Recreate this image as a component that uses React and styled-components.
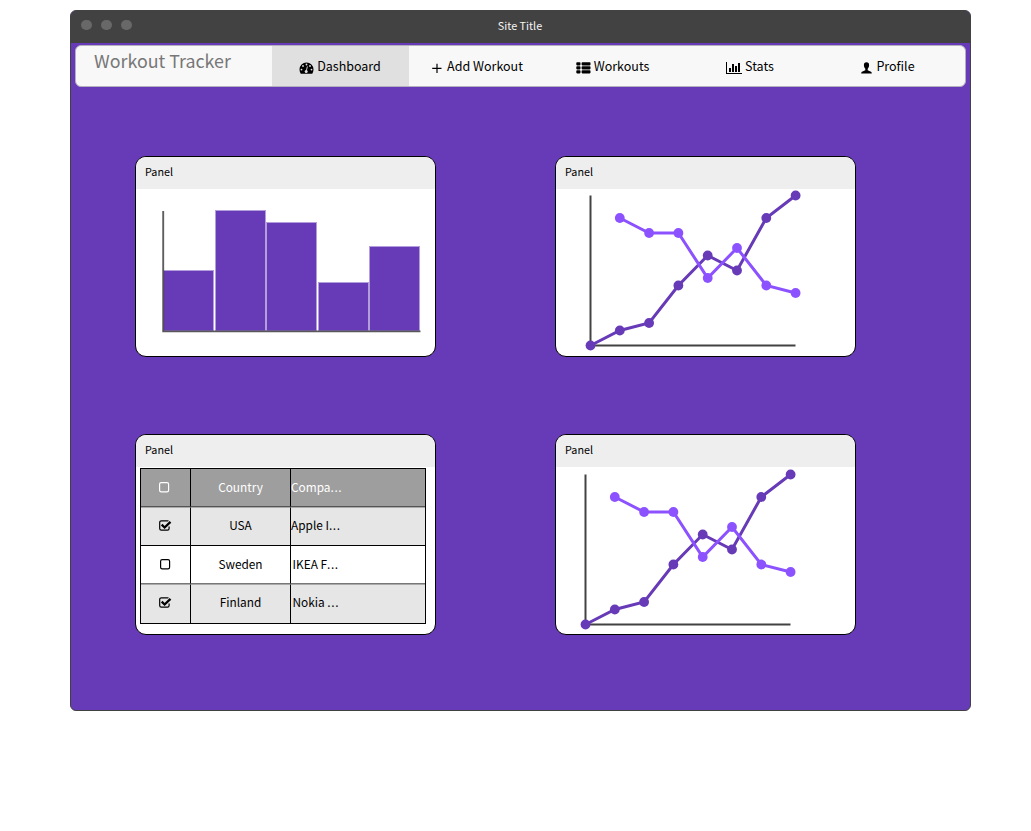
import React from "react";
import styled, { createGlobalStyle } from "styled-components";

const GlobalStyle = createGlobalStyle`
  * { box-sizing: border-box; }
  body {
    margin: 0;
    background: #fff;
    font-family: "Noto Sans CJK SC", "Noto Sans", sans-serif;
    color: #000;
  }
  svg { display: block; flex: none; }
`;

const Page = styled.div`
  padding: 10px 60px 0 70px;
`;

const Window = styled.div`
  width: 901px;
  height: 701px;
  border: 1px solid #424242;
  border-radius: 6px;
  background: #673ab7;
  overflow: hidden;
`;

const TitleBar = styled.header`
  display: grid;
  grid-template-columns: 1fr auto 1fr;
  align-items: center;
  height: 32px;
  padding: 0 11px 4px 10px;
  background: #424242;
  color: #f5f5f5;
  font-size: 10.8px;
  line-height: 16px;
`;

const Dots = styled.div`
  display: flex;
  gap: 9.4px;
`;

const Dot = styled.span`
  width: 10.6px;
  height: 10.6px;
  border-radius: 50%;
  background: #686868;
`;

const Nav = styled.nav`
  display: flex;
  width: 891px;
  height: 42px;
  margin: 2px 0 0 4px;
  border: 1px solid #b5b0bd;
  border-radius: 6px;
  background: #f8f8f8;
  overflow: hidden;
`;

const Brand = styled.div`
  width: 196px;
  padding: 1px 0 0 18px;
  color: #777;
  font-size: 17.85px;
  line-height: 26px;
  white-space: nowrap;
`;

const NavItem = styled.a`
  display: flex;
  align-items: center;
  justify-content: center;
  gap: ${({ $gap }) => $gap || 3}px;
  width: 137px;
  padding: 3px ${({ $shift }) => $shift || 0}px 0 0;
  background: ${({ $active }) => ($active ? "#e0e0e0" : "transparent")};
  font-size: 12.5px;
  line-height: 20px;
  white-space: nowrap;
`;

const Label = styled.span`
  padding-bottom: 4px;
`;

const Grid = styled.main`
  display: grid;
  grid-template-columns: 301px 301px;
  gap: 77px 119px;
  padding: 69px 0 0 64px;
`;

const Card = styled.section`
  height: 201px;
  border: 1px solid #000;
  border-radius: 11px;
  background: #fff;
  overflow: hidden;
`;

const CardTitle = styled.h2`
  height: 32px;
  margin: 0;
  padding: 6px 9px;
  background: #eee;
  font-size: 10.8px;
  font-weight: 400;
  line-height: 16px;
`;

const Table = styled.div`
  width: 286px;
  margin: 1px 0 0 4px;
  border: 1px solid #000;
  font-size: 11.85px;
`;

const rowTones = {
  head: "#9e9e9e",
  odd: "#e6e6e6",
  even: "#fff",
};

const Row = styled.div`
  display: grid;
  grid-template-columns: 50px 100px 1fr;
  height: ${({ $height }) => $height}px;
  background: ${({ $tone }) => rowTones[$tone]};
  color: ${({ $tone }) => ($tone === "head" ? "#fff" : "#000")};
`;

const Cell = styled.div`
  display: flex;
  align-items: center;
  justify-content: ${({ $start }) => ($start ? "flex-start" : "center")};
  padding-left: ${({ $indent }) => $indent || 0}px;
  padding-bottom: ${({ $lift }) => $lift || 0}px;
  border-right: ${({ $start }) => ($start ? "0" : "1px solid #000")};
  border-top: ${({ $top }) => ($top ? `1px solid ${$top}` : "0")};
  border-bottom: ${({ $bottom }) => ($bottom ? `1px solid ${$bottom}` : "0")};
  line-height: 18px;
  white-space: pre;
`;

const CheckCell = styled(Cell)`
  padding-right: ${({ $nudge }) => $nudge || 0}px;
`;

const Ellipsis = styled.span`
  font-family: "Open Sans", sans-serif;
  font-size: 12.5px;
  letter-spacing: 0.6px;
`;

const GaugeIcon = () => (
  <svg width="15" height="12" viewBox="0 0 15 12">
    <path d="M7.5 .5a7 7 0 0 0-7 7c0 1.4.4 2.6 1 3.7.2.4.4.5.8.5h10.4c.4 0 .6-.1.8-.5.6-1.1 1-2.3 1-3.7a7 7 0 0 0-7-7z" />
    <g fill="#e0e0e0">
      <circle cx="2.5" cy="7.6" r=".9" />
      <circle cx="4" cy="4" r=".9" />
      <circle cx="7.5" cy="2.5" r=".9" />
      <circle cx="11" cy="4" r=".9" />
      <circle cx="12.5" cy="7.6" r=".9" />
      <circle cx="7.2" cy="9.4" r="1.5" />
    </g>
    <path d="M7.2 9.3l1.1-4.5" stroke="#e0e0e0" strokeWidth=".9" strokeLinecap="round" />
  </svg>
);

const PlusIcon = () => (
  <svg width="10" height="10" viewBox="0 0 10 10">
    <path d="M.2 5.3h9.3M5 .7v9.2" stroke="#000" strokeWidth="1.2" />
  </svg>
);

const ListIcon = () => (
  <svg width="15" height="12" viewBox="0 0 15 12">
    {[0.2, 4.2, 8.2].map((y) => (
      <g key={y}>
        <rect x=".3" y={y} width="4.2" height="3.2" rx=".8" />
        <rect x="5.6" y={y} width="8.9" height="3.2" rx=".8" />
      </g>
    ))}
  </svg>
);

const BarsIcon = () => (
  <svg width="16" height="12" viewBox="0 0 16 12">
    <path d="M0 0h1v11h15v1H0zM3 6h2v4H3zM6 2h2v8H6zM9 4h2v6H9zM12 1h2v9h-2z" />
  </svg>
);

const UserIcon = () => (
  <svg width="11" height="12" viewBox="0 0 11 12">
    <path d="M5.5.3C3.7.3 2.9 1.4 2.9 3c0 1.5.5 2.9 1.4 3.7v1.6L1 9.7c-.5.3-.8.8-.8 1.8h10.600c0-1-.3-1.500-.8-1.800L6.700 8.300V6.700C7.600 5.900 8.100 4.500 8.100 3c0-1.600-.8-2.700-2.600-2.700z" />
  </svg>
);

const Checkbox = ({ checked }) => (
  <svg width="13" height="11" viewBox="0 0 13 11" fill="none" stroke="currentColor">
    {checked ? (
      <>
        <path d="M9.5 1.1C9.1.8 8.800.8 8.300.8H2.300A1.600 1.600 0 0 0 .7 2.400v6.200a1.600 1.600 0 0 0 1.600 1.600h6.200a1.600 1.600 0 0 0 1.600-1.600V6.600" strokeWidth="1.2" />
        <path d="M2.7 4.7l2.9 2.8 5.9-5.7" strokeWidth="2.3" />
      </>
    ) : (
      <rect x="1.6" y=".7" width="9" height="9.2" rx="1.6" strokeWidth="1.2" />
    )}
  </svg>
);

const bars = [
  [28.5, 81.5],
  [80.5, 21.5],
  [131.5, 33.5],
  [183.5, 93.5],
  [234.5, 57.5],
];

const BarChart = () => (
  <svg width="299" height="167" viewBox="1 33 299 167">
    {bars.map(([x, offset]) => (
      <rect
        key={x}
        x={x}
        y={offset + 33}
        width="50"
        height={142 - offset}
        fill="#673ab7"
        stroke="#b39ddb"
      />
    ))}
    <path d="M28.2 55v120.4H285.5" fill="none" stroke="#424242" strokeOpacity=".85" strokeWidth="1.9" />
  </svg>
);

const STEP = 29.3;
const rising = [0, 15, 22.5, 60, 90, 75, 127.5, 150];
const falling = [null, 127.5, 112.5, 112.5, 67.5, 97.5, 60, 52.5];

const Series = ({ values, color }) => {
  const points = values
    .map((v, i) => (v === null ? null : [i * STEP, -v]))
    .filter(Boolean);
  return (
    <g>
      <polyline
        points={points.map((p) => p.join(",")).join(" ")}
        fill="none"
        stroke={color}
        strokeWidth="3"
      />
      {points.map(([x, y]) => (
        <circle key={x} cx={x} cy={y} r="4.9" fill={color} />
      ))}
    </g>
  );
};

const LineChart = ({ x, y }) => (
  <svg width="299" height="167" viewBox="1 33 299 167">
    <g transform={`translate(${x} ${y})`}>
      <path d="M0-150V0H205" fill="none" stroke="#424242" strokeWidth="2" />
      <Series values={rising} color="#673ab7" />
      <Series values={falling} color="#8c52ff" />
    </g>
  </svg>
);

const rows = [
  { tone: "head", height: 38, bottom: "#555", country: "Country", company: "Compa", indent: 0, nudge: 2, lift: 1 },
  { tone: "odd", height: 39, top: "#aaa", bottom: "#000", checked: true, country: "USA", company: "Apple I", indent: 0, lift: 3 },
  { tone: "even", height: 38, bottom: "#777", country: "Sweden", company: "IKEA F", indent: 1.6, lift: 1 },
  { tone: "odd", height: 39, top: "#aaa", checked: true, country: "Finland", company: "Nokia ", indent: 1.5, lift: 4 },
];

const CompanyTable = () => (
  <Table>
    {rows.map((r) => (
      <Row key={r.country} $tone={r.tone} $height={r.height}>
        <CheckCell $top={r.top} $bottom={r.bottom} $nudge={r.nudge} $lift={r.lift - 1}>
          <Checkbox checked={r.checked} />
        </CheckCell>
        <Cell $top={r.top} $bottom={r.bottom} $lift={r.lift}>{r.country}</Cell>
        <Cell $start $indent={r.indent} $top={r.top} $bottom={r.bottom} $lift={r.lift}>
          <span>{r.company}<Ellipsis>...</Ellipsis></span>
        </Cell>
      </Row>
    ))}
  </Table>
);

const Panel = ({ children }) => (
  <Card>
    <CardTitle>Panel</CardTitle>
    {children}
  </Card>
);

export default function App() {
  return (
    <Page>
      <GlobalStyle />
      <Window>
        <TitleBar>
          <Dots>
            <Dot />
            <Dot />
            <Dot />
          </Dots>
          <span>Site Title</span>
        </TitleBar>
        <Nav>
          <Brand>Workout Tracker</Brand>
          <NavItem $active $shift={1}><GaugeIcon /><Label>Dashboard</Label></NavItem>
          <NavItem $gap={5}><PlusIcon /><Label>Add Workout</Label></NavItem>
          <NavItem $shift={4}><ListIcon /><Label>Workouts</Label></NavItem>
          <NavItem $shift={3}><BarsIcon /><Label>Stats</Label></NavItem>
          <NavItem $gap={4.5} $shift={1.5}><UserIcon /><Label>Profile</Label></NavItem>
        </Nav>
        <Grid>
          <Panel><BarChart /></Panel>
          <Panel><LineChart x={35.5} y={189.5} /></Panel>
          <Panel><CompanyTable /></Panel>
          <Panel><LineChart x={30.5} y={190.5} /></Panel>
        </Grid>
      </Window>
    </Page>
  );
}
